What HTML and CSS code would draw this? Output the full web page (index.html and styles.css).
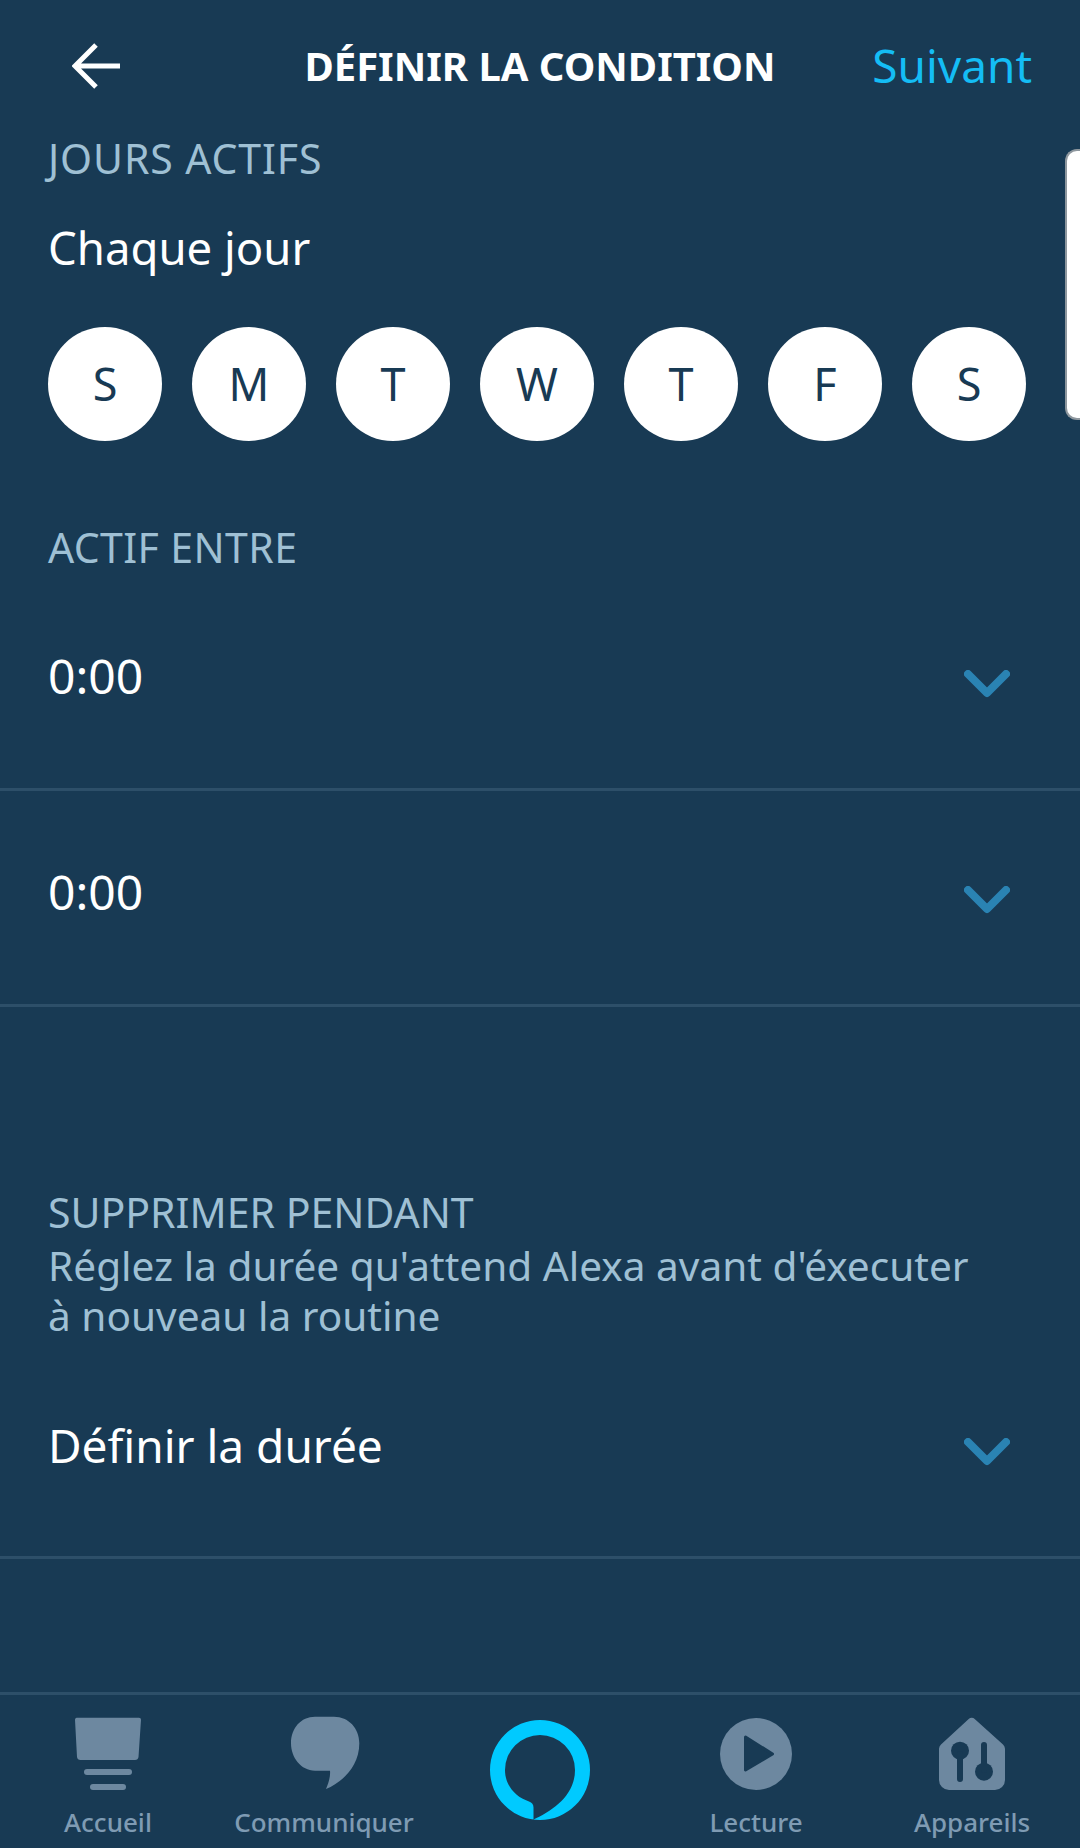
FILE: index.html
```html
<!DOCTYPE html>
<html>
    <head>
        <meta charset="utf-8"/>
        <title>Définir la condition</title>
        <link rel="stylesheet" href="styles.css">
    </head>
    <body>
        <div id="page">
            <div class="header">
                <svg class="back" width="48" height="48" viewBox="0 0 48 48"><path d="M48 24H5M24 3L3 24l21 21" fill="none" stroke="#fff" stroke-width="5"/></svg>
                <div class="title">DÉFINIR LA CONDITION</div>
                <div class="next">Suivant</div>
            </div>

            <div class="content">
                <div class="label caps days-label">JOURS ACTIFS</div>
                <div class="value every-day">Chaque jour</div>
                <ul class="days">
                    <li>S</li>
                    <li>M</li>
                    <li>T</li>
                    <li>W</li>
                    <li>T</li>
                    <li>F</li>
                    <li>S</li>
                </ul>

                <div class="label caps active-label">ACTIF ENTRE</div>
                <div class="row">
                    <div class="value time">0:00</div>
                    <svg class="chevron" width="46" height="28" viewBox="0 0 46 28"><path d="M4 4l19 19L42 4" fill="none" stroke="#2a83b3" stroke-width="8" stroke-linecap="round" stroke-linejoin="round"/></svg>
                </div>
                <div class="row">
                    <div class="value time">0:00</div>
                    <svg class="chevron" width="46" height="28" viewBox="0 0 46 28"><path d="M4 4l19 19L42 4" fill="none" stroke="#2a83b3" stroke-width="8" stroke-linecap="round" stroke-linejoin="round"/></svg>
                </div>

                <div class="label caps snooze-label">SUPPRIMER PENDANT</div>
                <div class="label hint">Réglez la durée qu'attend Alexa avant d'éxecuter<br>à nouveau la routine</div>
                <div class="row">
                    <div class="value">Définir la durée</div>
                    <svg class="chevron" width="46" height="28" viewBox="0 0 46 28"><path d="M4 4l19 19L42 4" fill="none" stroke="#2a83b3" stroke-width="8" stroke-linecap="round" stroke-linejoin="round"/></svg>
                </div>
            </div>

            <div class="side-tab"></div>

            <div class="tabs">
                <div class="tab">
                    <svg width="72" height="74" viewBox="0 0 72 74" fill="#6d88a0"><path d="M4.500 1.700H67a2 2 0 0 1 2 2L66.500 41a3.500 3.500 0 0 1-3.500 3H8.500a3.500 3.500 0 0 1-3.500-3L3 3.700a2 2 0 0 1 1.500-2z"/><rect x="12" y="53" width="48" height="6" rx="3"/><rect x="18" y="68" width="36" height="6" rx="3"/></svg>
                    <span>Accueil</span>
                </div>
                <div class="tab">
                    <svg width="72" height="74" viewBox="0 0 72 74" fill="#6d88a0"><path d="M27 .7H46C60.500 .7 71.300 12 71.300 27.300 71.300 50 55 66 38 73 41 66 42.500 60 42 54.700H27C13 54.700 3 41.500 3 27.300 3 12 13 .7 27 .7z"/></svg>
                    <span>Communiquer</span>
                </div>
                <div class="tab">
                    <svg class="alexa" width="100" height="100" viewBox="0 0 100 100"><path fill-rule="evenodd" fill="#00caff" d="M50 0a50 50 0 1 1 0 100 50 50 0 1 1 0-100zM50 15A35 35 0 0 0 15 50c0 15 10 27 24 31.500 3 1 4.500 3 4.500 6V99.500C62 91 85 76 85 50A35 35 0 0 0 50 15z"/></svg>
                </div>
                <div class="tab">
                    <svg width="72" height="74" viewBox="0 0 72 74"><circle cx="36" cy="38" r="36" fill="#6d88a0"/><path d="M25.500 21l27 17-27 16z" fill="#183a54" stroke="#183a54" stroke-width="3" stroke-linejoin="round"/></svg>
                    <span>Lecture</span>
                </div>
                <div class="tab">
                    <svg width="72" height="74" viewBox="0 0 72 74"><path fill="#6d88a0" d="M32.700 3a4.200 4.200 0 0 1 6 0L67 28.500a6 6 0 0 1 2 4.200V64a10 10 0 0 1-10 10H13A10 10 0 0 1 3 64V32.700a6 6 0 0 1 2-4.200z"/><circle cx="24" cy="34.700" r="9" fill="#183a54"/><circle cx="48" cy="55.700" r="9" fill="#183a54"/><path d="M24 38v25M48 29v25" stroke="#183a54" stroke-width="6" stroke-linecap="round"/></svg>
                    <span>Appareils</span>
                </div>
            </div>
        </div>
    </body>
</html>
```

FILE: styles.css
```css
* {
    margin: 0;
    padding: 0;
    box-sizing: border-box;
}

body {
    background: #183a54;
    font-family: "Noto Sans", "Open Sans", sans-serif;
}

#page {
    position: relative;
    display: flex;
    flex-direction: column;
    width: 1080px;
    height: 1848px;
    overflow: hidden;
}

.header {
    display: grid;
    grid-template-columns: 1fr auto 1fr;
    align-items: center;
    height: 133px;
    padding: 0 48px 2px 72px;
}

.title {
    padding-right: 24px;
    color: #fff;
    font-size: 40px;
    font-weight: 700;
}

.next {
    justify-self: end;
    margin-bottom: 2px;
    color: #14bdf5;
    font-size: 46px;
}

.content {
    flex: 1;
}

.label {
    padding: 0 48px;
    color: #9fc0d4;
    font-size: 40.6px;
    line-height: 50px;
}

.caps {
    font-size: 41px;
}

.days-label {
    letter-spacing: 0.9px;
}

.hint {
    padding-top: 4px;
    padding-bottom: 2px;
}

.value {
    margin-bottom: 9px;
    color: #fff;
    font-size: 46px;
    line-height: 60px;
}

.time {
    margin-bottom: 12px;
    font-size: 48px;
}

.every-day {
    margin-top: 34px;
    margin-bottom: 0;
    padding: 0 48px;
    font-size: 45.500px;
}

.days {
    display: flex;
    gap: 30px;
    margin-top: 50px;
    padding: 0 48px;
    list-style: none;
}

.days li {
    display: flex;
    align-items: center;
    justify-content: center;
    width: 114px;
    height: 114px;
    padding-bottom: 2px;
    border-radius: 50%;
    background: #fff;
    color: #183a54;
    font-size: 45px;
}

.active-label {
    margin-top: 81px;
    margin-bottom: 3px;
    letter-spacing: 0.4px;
}

.row {
    display: flex;
    align-items: center;
    justify-content: space-between;
    height: 216px;
    padding: 0 70px 0 48px;
    border-bottom: 3px solid #2d4f69;
}

.chevron {
    margin-top: 4px;
}

.snooze-label {
    margin-top: 180px;
}

.side-tab {
    position: absolute;
    top: 149px;
    right: 0;
    width: 15px;
    height: 271px;
    border: 2px solid #8e979e;
    border-right: 0;
    border-radius: 12px 0 0 12px;
    background: #fff;
}

.tabs {
    display: flex;
    height: 156px;
    border-top: 3px solid #2d4f69;
}

.tab {
    display: flex;
    flex: 1;
    flex-direction: column;
    align-items: center;
    padding-top: 21px;
    color: #7f9bb3;
    font-size: 26px;
    font-weight: 500;
}

.tab span {
    margin-top: 14px;
}

.alexa {
    margin-top: 4px;
}
```
